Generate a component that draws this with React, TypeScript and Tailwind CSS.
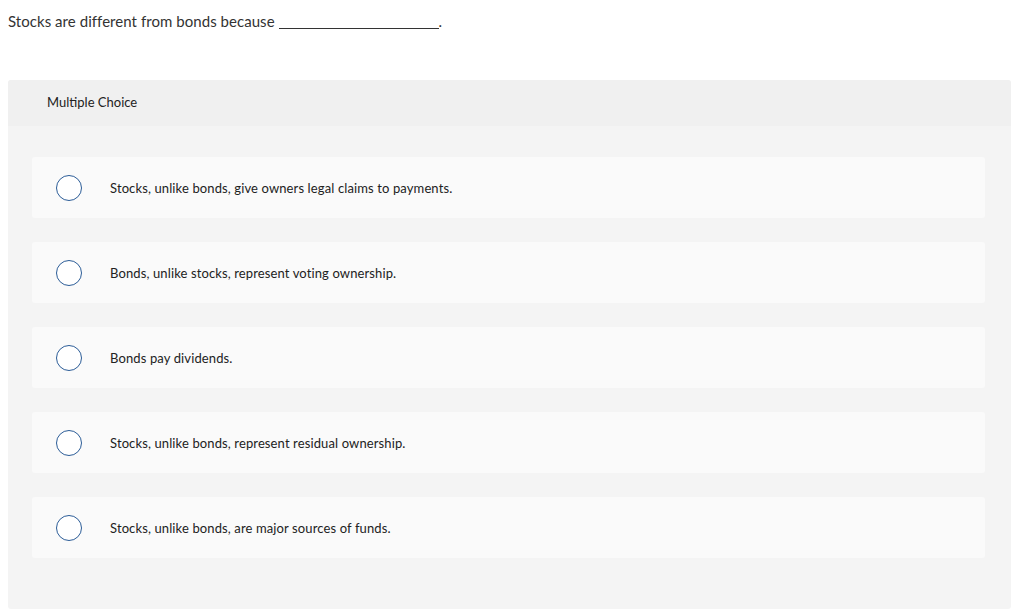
import React from "react";

const options = [
  "Stocks, unlike bonds, give owners legal claims to payments.",
  "Bonds, unlike stocks, represent voting ownership.",
  "Bonds pay dividends.",
  "Stocks, unlike bonds, represent residual ownership.",
  "Stocks, unlike bonds, are major sources of funds.",
];

export default function App() {
  return (
    <div className="w-[1024px] h-[615px] bg-white text-[#222] font-['Lato','Liberation_Sans',sans-serif] overflow-hidden">
      <div className="pl-2 pt-[11px] h-[80px]">
        <p className="text-[15px] leading-[20px] text-[#333] tracking-[0.05px]">
          Stocks are different from bonds because{" "}
          <span className="inline-block w-[160px] border-b border-[#333] align-baseline translate-y-[2px]"></span>.
        </p>
      </div>
      <div className="ml-2 w-[1003px] h-[529px] rounded-[3px] bg-[#f4f4f4] overflow-hidden">
        <div className="h-[46px] bg-[#f0f0f0] flex items-center pl-[39px]">
          <span className="text-[13px] text-[#222]">Multiple Choice</span>
        </div>
        <div className="px-6 pt-[31px] flex flex-col gap-[24px]">
          {options.map((o) => (
            <div
              key={o}
              className="h-[61px] w-[953px] bg-[#fafafa] rounded-[3px] flex items-center"
            >
              <span className="ml-6 w-[26px] h-[26px] rounded-full border border-[#2b5c97] bg-white shrink-0"></span>
              <span className="ml-[28px] text-[13px] text-[#222] tracking-[0.12px] translate-y-[1px]">{o}</span>
            </div>
          ))}
        </div>
      </div>
    </div>
  );
}
